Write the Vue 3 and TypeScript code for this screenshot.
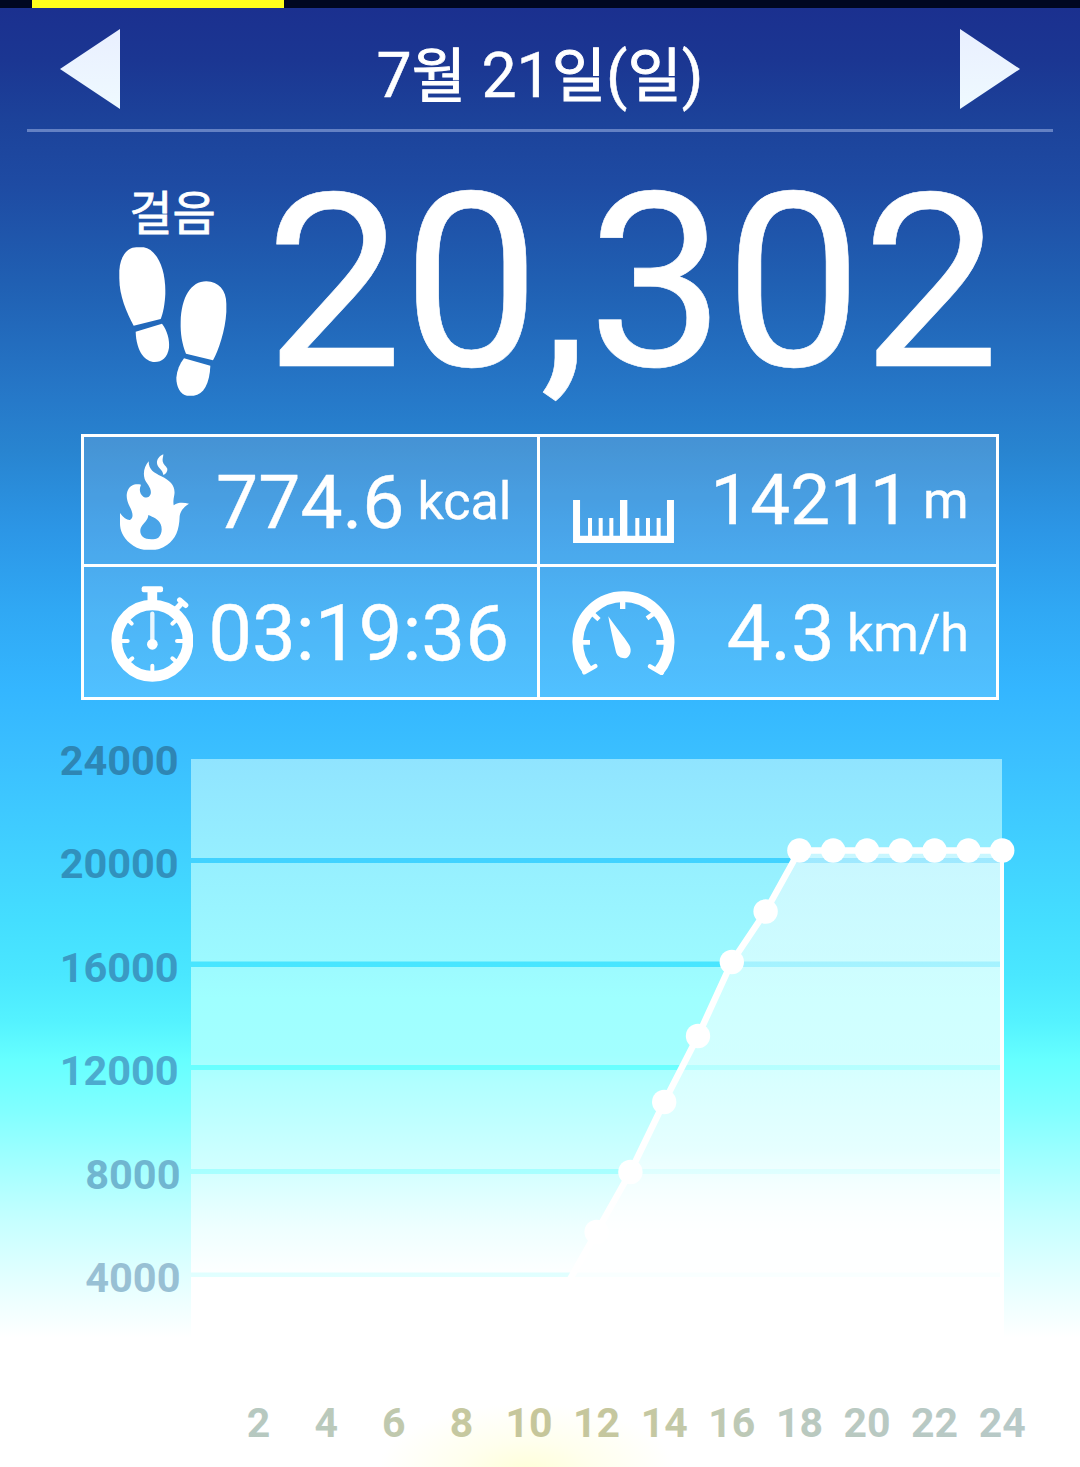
<script setup lang="ts">
interface Point {
  x: number
  y: number
}

const plotLeft = 191
const hourWidth = 33.8

const yLabels = [
  { text: '24000', y: 775, right: 178.7, color: '#2e86b4' },
  { text: '20000', y: 878, right: 178.7, color: '#3191bd' },
  { text: '16000', y: 982, right: 178.7, color: '#3a9ac4' },
  { text: '12000', y: 1085, right: 178.7, color: '#4cabce' },
  { text: '8000', y: 1189, right: 180.5, color: '#70b6d0' },
  { text: '4000', y: 1292, right: 180.5, color: '#98c0d4' },
]

const hours = Array.from({ length: 12 }, (_, i) => (i + 1) * 2)

const bands = [
  { y: 759, h: 99 },
  { y: 863, h: 98.5 },
  { y: 967, h: 98 },
  { y: 1070, h: 99 },
  { y: 1174, h: 98.5 },
  { y: 1277, h: 101 },
]

const levels: [number, number][] = [
  [11, 1292],
  [12, 1232],
  [13, 1172],
  [14, 1102],
  [15, 1036],
  [16, 962],
  [17, 911.5],
  [18, 850.5],
  [19, 850.5],
  [20, 850.5],
  [21, 850.5],
  [22, 850.5],
  [23, 850.5],
  [24, 850.5],
]

const points: Point[] = levels.map(([h, y]) => ({ x: plotLeft + h * hourWidth, y }))
const line = points.map((p) => `${p.x},${p.y}`).join(' ')
const area = `${line} 1002,1378 520,1378`
</script>

<template>
  <main class="page">
    <div class="tabs"><span class="tab-active"></span></div>

    <header class="date-bar">
      <svg class="arrow" width="60" height="80" viewBox="0 0 60 80"><path d="M0 40 60 0V80Z" fill="url(#arrowFill)" /></svg>
      <h1 class="date">7<b>월</b> 21<b>일</b>(<b>일</b>)</h1>
      <svg class="arrow" width="60" height="80" viewBox="0 0 60 80">
        <defs>
          <linearGradient id="arrowFill" x1="0" y1="0" x2="0" y2="1">
            <stop offset="0" stop-color="#e9efff" />
            <stop offset="1" stop-color="#effaff" />
          </linearGradient>
        </defs>
        <path d="M60 40 0 0V80Z" fill="url(#arrowFill)" />
      </svg>
    </header>

    <section class="steps">
      <div class="steps-side">
        <span class="steps-label">걸음</span>
        <svg width="108" height="149" viewBox="56 230 324 447" fill="#fff">
          <path d="M100 466C78 425 57 375 57 325V300C60 255 82 231 108 231H130C168 238 196 290 195 368C194 400 188 430 181 446Z" />
          <path d="M106 484 185 460C200 480 208 505 206 532C202 560 185 575 163 575C135 574 108 545 106 484Z" />
          <path d="M257 550C245 520 240 490 241 455C243 380 272 333 318 333C355 334 378 360 378 400V425C375 480 355 540 338 570Z" />
          <path d="M251 564 330 586C328 640 310 672 280 676H260C240 672 228 650 228 622C230 600 238 580 251 564Z" />
        </svg>
      </div>
      <div class="steps-value">20,302</div>
    </section>

    <section class="stats">
      <div class="cell calories">
        <svg class="icon" width="71" height="96" viewBox="117 70 213 288" fill="#fff">
          <path fill-rule="evenodd" d="M206 92C206 118 222 126 244 137C272 150 287 168 283 192C281 204 279 212 281 224C296 214 310 216 327 219C310 230 302 240 299 256C298 300 286 325 262 342C245 354 232 357 222 357H192C178 355 163 350 150 338C128 320 120 296 120 280V247C130 262 142 269 150 268C162 262 158 244 150 230C138 206 138 190 144 178C150 162 168 158 183 162C176 178 180 190 190 198C200 204 208 200 212 190C216 172 200 160 194 145C188 125 194 106 206 92ZM205 253C204 267 194 275 187 284C178 296 179 310 189 319C198 327 224 328 235 321C245 312 248 296 242 281C236 265 220 260 205 253Z" />
          <path d="M250 71C238 76 230 86 231 98C232 112 248 116 250 133C258 130 263 122 262 114C258 106 250 102 248 92C247 84 250 78 250 71Z" />
        </svg>
        <span class="value">774.6</span><span class="unit">kcal</span>
      </div>
      <div class="cell distance">
        <svg class="icon" width="101" height="43.3" viewBox="129 208 303 130" fill="#fff">
          <path d="M129 208h21v107h24v-53h12v53h20v-53h12v53h20v-53h12v53h20V208h22v107h24v-53h12v53h20v-53h12v53h20v-53h12v53h19V208h21v130H129Z" />
        </svg>
        <span class="value">14211</span><span class="unit">m</span>
      </div>
      <div class="cell time">
        <svg class="icon" width="82.7" height="96" viewBox="92 77 248 288" fill="none" stroke="#fff">
          <circle cx="216" cy="241" r="107" stroke-width="32" />
          <rect x="184" y="78" width="64" height="18" rx="6" fill="#fff" stroke="none" />
          <path d="M216 88V125" stroke-width="29" />
          <path d="M284 150 306 126" stroke-width="17" />
          <path d="M298 119 316 135" stroke-width="16" stroke-linecap="round" />
          <path d="M122 242H142M290 242H310M216 316V336M141 177 154 190M141 307 156 294M276 190 292 175M276 294 292 308" stroke-width="12" stroke-linecap="round" />
          <path d="M216 160V245" stroke-width="13" stroke-linecap="round" stroke-opacity=".88" />
          <circle cx="216" cy="252" r="16" fill="#fff" stroke="none" />
        </svg>
        <span class="value">03:19:36</span>
      </div>
      <div class="cell speed">
        <svg class="icon" width="103" height="84.7" viewBox="127 92 309 254" fill="none" stroke="#fff">
          <path d="M175 332A137 137 0 1 1 386 334" stroke-width="32" />
          <path d="M164 336 197 317M396 338 361 318" stroke-width="13" stroke-linecap="round" />
          <path d="M158 246H181M380 246H404M190 161 208 178M372 160 352 174" stroke-width="14" />
          <path d="M279 118V146" stroke-width="16" />
          <path d="M236 168C250 190 285 232 297 252C307 266 304 284 292 292C280 297 264 290 260 278C256 262 240 195 236 168Z" fill="#fff" stroke="none" />
        </svg>
        <span class="value">4.3</span><span class="unit">km/h</span>
      </div>
    </section>

    <svg class="chart" width="1080" height="767" viewBox="0 700 1080 767">
      <defs>
        <linearGradient id="panel" gradientUnits="userSpaceOnUse" x1="0" y1="759" x2="0" y2="1279">
          <stop offset="0" stop-color="#90e4ff" />
          <stop offset=".19" stop-color="#96efff" />
          <stop offset=".38" stop-color="#9cf9ff" />
          <stop offset=".46" stop-color="#9fffff" />
          <stop offset=".57" stop-color="#a2ffff" />
          <stop offset=".62" stop-color="#b0ffff" />
          <stop offset=".78" stop-color="#d0ffff" />
          <stop offset=".9" stop-color="#eeffff" />
          <stop offset="1" stop-color="#fff" />
        </linearGradient>
        <linearGradient id="hourText" gradientUnits="userSpaceOnUse" x1="191" y1="0" x2="1030" y2="0">
          <stop offset="0" stop-color="#b4c8c4" />
          <stop offset=".15" stop-color="#b9c9bd" />
          <stop offset=".33" stop-color="#c6c89f" />
          <stop offset=".42" stop-color="#c6c69a" />
          <stop offset=".55" stop-color="#c5c8a2" />
          <stop offset=".7" stop-color="#bac9be" />
          <stop offset="1" stop-color="#b7c9c8" />
        </linearGradient>
        <linearGradient id="areaFill" gradientUnits="userSpaceOnUse" x1="0" y1="850" x2="0" y2="1279">
          <stop offset="0" stop-color="#fcffff" stop-opacity=".5" />
          <stop offset=".7" stop-color="#fff" stop-opacity=".52" />
          <stop offset=".9" stop-color="#fff" stop-opacity=".95" />
          <stop offset="1" stop-color="#fff" stop-opacity=".8" />
        </linearGradient>
      </defs>
      <rect v-for="b in bands" :key="b.y" :x="plotLeft" :y="b.y" width="811" :height="b.h" fill="url(#panel)" />
      <polygon :points="area" fill="url(#areaFill)" />
      <path d="M1002 850V1378" stroke="#fff" stroke-width="4" />
      <polyline :points="line" fill="none" stroke="#fff" stroke-width="6.5" stroke-linejoin="round" />
      <circle v-for="p in points" :key="p.x" :cx="p.x" :cy="p.y" r="12.2" fill="#fff" />
      <text v-for="l in yLabels" :key="l.text" class="axis scale" text-anchor="end" :x="l.right" :y="l.y" :fill="l.color">{{ l.text }}</text>
      <text v-for="h in hours" :key="h" class="axis" text-anchor="middle" :x="plotLeft + h * hourWidth" y="1437" fill="url(#hourText)">{{ h }}</text>
    </svg>
  </main>
</template>

<style>
body {
  margin: 0;
}
</style>

<style scoped>
.page {
  width: 1080px;
  height: 1467px;
  overflow: hidden;
  color: #fff;
  font-family: Roboto, 'Noto Sans CJK KR', sans-serif;
  background:
    radial-gradient(ellipse 150px 68px at 527px 1472px, #ffffd8, rgba(255, 255, 230, 0.7) 45%, rgba(255, 255, 255, 0)),
    linear-gradient(
      #1b308f 8px,
      #1b3692 60px,
      #1c429a 120px,
      #1e4ba3 185px,
      #2060b3 285px,
      #2679c9 400px,
      #2884d0 450px,
      #2c96e6 530px,
      #30a8f4 610px,
      #34b6ff 690px,
      #3bc0ff 760px,
      #41d2ff 860px,
      #44deff 920px,
      #4ae7ff 975px,
      #54f2ff 1020px,
      #66ffff 1060px,
      #80ffff 1110px,
      #a0ffff 1160px,
      #c8ffff 1225px,
      #e6ffff 1285px,
      #fff 1338px
    );
}
.tabs {
  height: 8px;
  padding-left: 32px;
  background: #000720;
}
.tab-active {
  display: block;
  width: 252px;
  height: 8px;
  background: #ffff1c;
}
.date-bar {
  display: flex;
  justify-content: space-between;
  margin: 0 27px;
  height: 121px;
  padding: 0 33px;
  border-bottom: 3px solid #6481c4;
}
.arrow {
  margin-top: 21px;
}
.date {
  margin: 27.5px 0 0;
  font-size: 62.5px;
  font-weight: 400;
  line-height: 80px;
  white-space: nowrap;
  -webkit-text-stroke: 0.5px #fff;
}
.date b {
  font-size: 59px;
  line-height: 1;
  font-weight: 400;
  -webkit-text-stroke: 1px #fff;
}
.steps {
  display: flex;
  height: 302px;
}
.steps-side {
  display: flex;
  flex-direction: column;
  align-items: center;
  width: 108px;
  margin-left: 119px;
}
.steps-label {
  margin: 52px 0 3.7px -1px;
  font-size: 47px;
  line-height: 59px;
  -webkit-text-stroke: 0.8px #fff;
}
.steps-value {
  margin: 61px 0 0 38.6px;
  font-size: 244px;
  line-height: 180px;
  white-space: nowrap;
  -webkit-text-stroke: 0.6px #fff;
}
.stats {
  display: grid;
  grid-template-columns: 453px 456px;
  grid-template-rows: 127px 130px;
  gap: 3px;
  width: 912px;
  margin-left: 81px;
  border: 3px solid #fff;
  background: linear-gradient(#fff, #fff) 453px 0 / 3px 100% no-repeat, linear-gradient(#fff, #fff) 0 127px / 100% 3px no-repeat;
}
.cell {
  display: flex;
  align-items: flex-start;
  background: rgba(255, 255, 255, 0.14);
}
.icon {
  flex: none;
}
.value {
  margin-left: auto;
  line-height: 80px;
  -webkit-text-stroke: 0.4px #fff;
}
.unit {
  font-size: 52px;
  line-height: 60px;
  -webkit-text-stroke: 0.4px #fff;
}
.calories .icon {
  margin: 16.5px 0 0 35px;
}
.calories .value {
  margin-top: 25px;
  font-size: 75px;
}
.calories .unit {
  margin: 34.6px 25.5px 0 13px;
}
.distance .icon {
  margin: 62.5px 0 0 33px;
}
.distance .value {
  margin-top: 23px;
  font-size: 71px;
}
.distance .unit {
  margin: 34px 27.5px 0 13px;
}
.time .icon {
  margin: 18.7px 0 0 26.7px;
}
.time .value {
  margin: 27.4px 28px 0 auto;
  font-size: 78px;
}
.speed .icon {
  margin: 23.7px 0 0 32px;
}
.speed .value {
  margin-top: 27.4px;
  font-size: 78px;
}
.speed .unit {
  margin: 36.6px 27px 0 12px;
}
.chart {
  display: block;
}
.axis {
  font-size: 41px;
  font-weight: 700;
}
.scale {
  font-size: 41.5px;
}
</style>
